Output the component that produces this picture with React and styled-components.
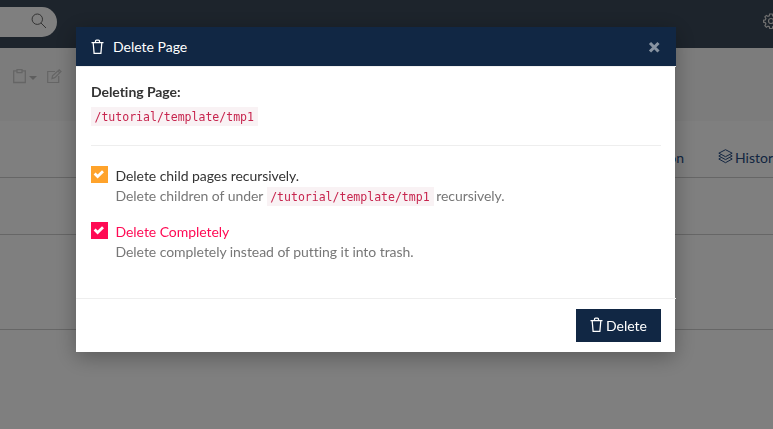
import React from "react";
import styled, { createGlobalStyle } from "styled-components";

const GlobalStyle = createGlobalStyle`
  *, *::before, *::after { box-sizing: border-box; }
  html, body { margin: 0; height: 100%; overflow: hidden; }
  body { font-family: Lato, sans-serif; font-size: 14px; line-height: 20px; color: #333; background: #fff; }
`;

const Page = styled.div`
  height: 429px;
  overflow: hidden;
`;

const Navbar = styled.header`
  height: 48px;
  display: flex;
  align-items: flex-start;
  justify-content: space-between;
  padding-top: 7px;
  background: #3a4858;
  color: #e0e0e0;
`;

const SearchBox = styled.div`
  width: 57px;
  height: 30px;
  display: flex;
  align-items: flex-start;
  padding: 6px 0 0 31px;
  border-radius: 0 15px 15px 0;
  background: #fff;
  color: #666;
`;

const NavAction = styled.div`
  width: 10px;
  overflow: hidden;
  padding-top: 6px;
`;

const Toolbar = styled.div`
  height: 73px;
  display: flex;
  align-items: flex-start;
  padding: 21px 0 0 13px;
  background: #f9f9f9;
  color: #cacaca;
`;

const Caret = styled.span`
  margin: 7px 10px 0 3px;
  border: 4px solid transparent;
  border-top-color: #bcbcbc;
  border-bottom: 0;
`;

const TabBar = styled.nav`
  height: 57px;
  display: flex;
  align-items: flex-start;
  gap: 34px;
  padding: 27px 0 0 614px;
  border-bottom: 1px solid #ccc;
  white-space: nowrap;
  color: #264b82;
`;

const Tab = styled.span`
  display: flex;
  flex: none;
  gap: 2px;
  ${(p) => p.$first && "width: 70px; justify-content: flex-end;"}

  svg { margin-top: 1px; }
`;

const Section = styled.div`
  height: ${(p) => p.$height}px;
  border-bottom: 1px solid #ccc;
`;

const Backdrop = styled.div`
  position: fixed;
  inset: 0;
  padding: 27px 0 0 76px;
  background: rgba(0, 0, 0, 0.5);
`;

const Dialog = styled.section`
  width: 599px;
  height: 325px;
  display: flex;
  flex-direction: column;
  background: #fff;
  box-shadow: 0 5px 20px rgba(0, 0, 0, 0.3);
`;

const DialogHeader = styled.header`
  width: 600px;
  height: 40px;
  display: flex;
  align-items: center;
  padding: 0 15px;
  border-bottom: 1px solid #f0f0f0;
  background: #112744;
  background-clip: padding-box;
  color: #fff;
`;

const DialogTitle = styled.h1`
  flex: 1;
  margin: 1px 0 0 9px;
  font-size: 14px;
  font-weight: 400;
`;

const CloseButton = styled.button`
  width: 13px;
  height: 13px;
  display: flex;
  margin-top: 2px;
  padding: 0;
  border: 0;
  background: none;
  color: #8893a1;
`;

const DialogBody = styled.div`
  flex: 1;
  padding: 15px 14px 0 15px;
`;

const Label = styled.div`
  font-weight: 700;
  letter-spacing: -0.05px;
`;

const Code = styled.code`
  display: inline-block;
  height: 19px;
  padding: 0 4px 0 3.5px;
  background: #f9f2f4;
  color: #c7254e;
  font: 11.55px/20px "DejaVu Sans Mono", monospace;
  letter-spacing: -0.02px;
  vertical-align: top;
`;

const Target = styled.div`
  height: 43px;
  padding-top: 5px;
`;

const Divider = styled.hr`
  height: 1px;
  margin: 0 0 20px;
  border: 0;
  background: #eee;
`;

const Option = styled.div`
  height: 56px;
  display: flex;
  gap: 7.5px;
`;

const CheckBox = styled.span`
  flex: none;
  width: 17px;
  height: 17px;
  background: ${(p) => p.$color};
`;

const OptionText = styled.div`
  color: ${(p) => p.$color};
  letter-spacing: -0.05px;
`;

const Help = styled.div`
  color: #777;
`;

const HelpCode = styled(Code)`
  margin: 1px -1px 0 0;
`;

const DialogFooter = styled.footer`
  width: 600px;
  height: 54px;
  display: flex;
  justify-content: flex-end;
  padding: 10px 15px 0 0;
  border-top: 1px solid #eee;
`;

const DeleteButton = styled.button`
  width: 85px;
  height: 33px;
  display: flex;
  align-items: center;
  justify-content: center;
  gap: 3px;
  padding: 0;
  border: 0;
  background: #112744;
  color: #fff;
  font: 14px/20px Lato, sans-serif;

  svg { margin-top: -2px; }
`;

const Svg = styled.svg`
  flex: none;
  display: block;
  fill: none;
  stroke: currentColor;
  stroke-width: ${(p) => p.$weight || 1};
`;

const TrashIcon = () => (
  <Svg width="13" height="16" viewBox="0 0 13 16" $weight={1.25}>
    <path d="M.5 3.5h12M4.5 3V2q0-1 1-1h2q1 0 1 1v1M2.2 4l.9 10.4h6.8L10.8 4" />
  </Svg>
);

const SearchIcon = () => (
  <Svg width="16" height="16" viewBox="0 0 16 16">
    <circle cx="6.3" cy="6.2" r="5.2" />
    <path d="M10 10l5 5" />
  </Svg>
);

const GearIcon = () => (
  <Svg width="16" height="16" viewBox="0 0 16 16" $weight={1.2}>
    <path d="M6.7 1h2.6l.4 1.9 1.3.5 1.6-1 1.5 1.5-1 1.6.6 1.4 1.7.3v2l-1.8.5-.5 1.3 1 1.6-1.5 1.6-1.7-1.1-1.2.5-.4 1.9H6.7l-.4-1.9-1.2-.5-1.7 1.1-1.5-1.6 1-1.6-.5-1.3L.6 9.2v-2l1.7-.3.6-1.4-1-1.6 1.5-1.5 1.6 1 1.3-.5z" />
    <circle cx="8" cy="8" r="2.5" />
  </Svg>
);

const ClipboardIcon = () => (
  <Svg width="13" height="15" viewBox="0 0 13 15" $weight={1.3}>
    <path d="M4 1.8H.7v11.7h11.6V1.8H9M4 .7h5v3H4z" />
  </Svg>
);

const EditIcon = () => (
  <Svg width="15" height="15" viewBox="0 0 15 15" $weight={1.2}>
    <path d="M8 2.5H.7v11h11V7M5 9.5l.5-2.7 6.7-6L14 2.6l-6.2 6zM11 2l1.8 1.8" />
  </Svg>
);

const LayersIcon = () => (
  <Svg width="15" height="15" viewBox="0 0 15 15">
    <path d="M7.5.7l6.7 3.5-6.7 3.5L.8 4.2zM2.7 6L.8 7l6.7 3.6L14.2 7l-1.9-1M2.7 9L.8 10l6.7 3.7 6.7-3.7-1.9-1" />
  </Svg>
);

const CloseIcon = () => (
  <Svg width="13" height="13" viewBox="0 0 13 13" $weight={3.1}>
    <path d="M2 2l8.5 8.5M10.5 2L2 10.5" />
  </Svg>
);

const CheckIcon = () => (
  <Svg width="17" height="17" viewBox="0 0 17 17" $weight={2.8}>
    <path d="M3.6 7.6l3 2.9 5.4-5.2" stroke="#fff" />
  </Svg>
);

export default function App() {
  return (
    <>
      <GlobalStyle />
      <Page>
        <Navbar>
          <SearchBox><SearchIcon /></SearchBox>
          <NavAction><GearIcon /></NavAction>
        </Navbar>
        <Toolbar>
          <ClipboardIcon />
          <Caret />
          <EditIcon />
        </Toolbar>
        <TabBar>
          <Tab $first>Presentation</Tab>
          <Tab><LayersIcon />History</Tab>
        </TabBar>
        <Section $height={57} />
        <Section $height={95} />
      </Page>
      <Backdrop>
        <Dialog role="dialog" aria-modal="true">
          <DialogHeader>
            <TrashIcon />
            <DialogTitle>Delete Page</DialogTitle>
            <CloseButton aria-label="Close"><CloseIcon /></CloseButton>
          </DialogHeader>
          <DialogBody>
            <Label>Deleting Page:</Label>
            <Target><Code>/tutorial/template/tmp1</Code></Target>
            <Divider />
            <Option>
              <CheckBox $color="#ffa32b"><CheckIcon /></CheckBox>
              <OptionText $color="#333">
                Delete child pages recursively.
                <Help>
                  Delete children of under <HelpCode>/tutorial/template/tmp1</HelpCode>{" "}
                  recursively.
                </Help>
              </OptionText>
            </Option>
            <Option>
              <CheckBox $color="#ff0a54"><CheckIcon /></CheckBox>
              <OptionText $color="#ff0a54">
                Delete Completely
                <Help>Delete completely instead of putting it into trash.</Help>
              </OptionText>
            </Option>
          </DialogBody>
          <DialogFooter>
            <DeleteButton><TrashIcon />Delete</DeleteButton>
          </DialogFooter>
        </Dialog>
      </Backdrop>
    </>
  );
}
